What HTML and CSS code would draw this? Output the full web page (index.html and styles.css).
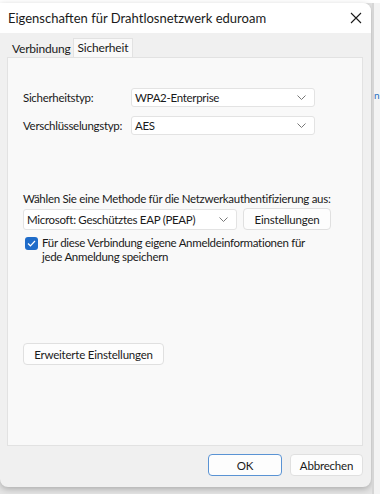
FILE: index.html
```html
<!DOCTYPE html>
<html lang="de">
<head>
  <meta charset="UTF-8" />
  <title>Eigenschaften für Drahtlosnetzwerk eduroam</title>
  <link rel="stylesheet" href="styles.css">
</head>
<body>
  <div class="screen">
    <div class="dialog">
      <div class="titlebar">
        <span class="title">Eigenschaften für Drahtlosnetzwerk eduroam</span>
        <svg class="close" width="12" height="12" viewBox="0 0 12 12">
          <path d="M1 1 L11 11 M11 1 L1 11" stroke="#1a1a1a" stroke-width="1.1" fill="none"/>
        </svg>
      </div>

      <div class="body">
        <div class="tabs">
          <div class="tab">Verbindung</div>
          <div class="tab active">Sicherheit</div>
        </div>

        <div class="panel">
          <div class="row">
            <span class="label">Sicherheitstyp:</span>
            <div class="select wide">
              <span>WPA2-Enterprise</span>
              <svg width="9" height="5" viewBox="0 0 9 5"><path d="M0.5 0.5 L4.5 4.5 L8.5 0.5" stroke="#777" fill="none"/></svg>
            </div>
          </div>
          <div class="row">
            <span class="label">Verschlüsselungstyp:</span>
            <div class="select wide">
              <span>AES</span>
              <svg width="9" height="5" viewBox="0 0 9 5"><path d="M0.5 0.5 L4.5 4.5 L8.5 0.5" stroke="#777" fill="none"/></svg>
            </div>
          </div>

          <div class="method">
            <p class="hint">Wählen Sie eine Methode für die Netzwerkauthentifizierung aus:</p>
            <div class="method-row">
              <div class="select method-select">
                <span>Microsoft: Geschütztes EAP (PEAP)</span>
                <svg width="9" height="5" viewBox="0 0 9 5"><path d="M0.5 0.5 L4.5 4.5 L8.5 0.5" stroke="#777" fill="none"/></svg>
              </div>
              <button class="btn settings">Einstellungen</button>
            </div>
            <label class="check">
              <span class="box">
                <svg width="9" height="7" viewBox="0 0 9 7"><path d="M1 3.5 L3.4 5.8 L8 1" stroke="#fff" stroke-width="1.2" fill="none"/></svg>
              </span>
              <span>Für diese Verbindung eigene Anmeldeinformationen für jede Anmeldung speichern</span>
            </label>
          </div>

          <button class="btn advanced">Erweiterte Einstellungen</button>
        </div>

        <div class="footer">
          <button class="btn ok">OK</button>
          <button class="btn">Abbrechen</button>
        </div>
      </div>
    </div>

    <div class="side">
      <span class="side-text">n</span>
    </div>
  </div>
</body>
</html>
```

FILE: styles.css
```css
body {
  margin: 0;
  background-color: #e4e4e4;
  font-family: Lato, "Noto Sans", sans-serif;
  font-size: 11.5px;
  letter-spacing: -0.3px;
  color: #1a1a1a;
}

.screen {
  display: flex;
  height: 494px;
  padding-top: 3px;
  box-sizing: border-box;
  background: linear-gradient(#ffffff 0, #ffffff 3px, #e4e4e4 3px);
}

.dialog {
  width: 371px;
  height: 484px;
  flex-shrink: 0;
  background-color: #f0f0f0;
  border-radius: 0 8px 8px 8px;
  box-shadow: 0 2px 6px rgba(0, 0, 0, 0.25);
  overflow: hidden;
  display: flex;
  flex-direction: column;
}

.titlebar {
  height: 30px;
  background-color: #fff;
  display: flex;
  align-items: center;
  justify-content: space-between;
  padding: 0 9px 0 8px;
}

.title {
  font-size: 13px;
  letter-spacing: 0;
}

.body {
  flex: 1;
  display: flex;
  flex-direction: column;
  padding: 6px 8px 0 7px;
}

.tabs {
  display: flex;
  height: 18px;
  align-items: flex-end;
  padding-left: 2px;
}

.tab {
  height: 16px;
  line-height: 16px;
  padding: 0 2px 0 3px;
  font-size: 12px;
  letter-spacing: -0.2px;
}

.tab.active {
  height: 19px;
  line-height: 18px;
  padding: 0 4px;
  background-color: #f9f9f9;
  border: 1px solid #e2e2e2;
  border-bottom: none;
  margin-bottom: -1px;
}

.panel {
  height: 389px;
  background-color: #f9f9f9;
  border: 1px solid #e2e2e2;
  padding: 30px 0 0 15px;
  box-sizing: border-box;
}

.row {
  display: flex;
  align-items: center;
  margin-bottom: 9px;
}

.label {
  width: 108px;
  white-space: nowrap;
}

.select {
  height: 19px;
  box-sizing: border-box;
  background-color: #fff;
  border: 1px solid #e3e3e3;
  border-radius: 3px;
  display: flex;
  align-items: center;
  justify-content: space-between;
  padding: 0 8px 0 3px;
  white-space: nowrap;
}

.select.wide {
  width: 184px;
}

.method {
  margin-top: 57px;
}

.hint {
  margin: 0 0 3px;
  white-space: nowrap;
}

.method-row {
  display: flex;
  gap: 6px;
  align-items: center;
}

.method-select {
  width: 214px;
  height: 21px;
}

.btn {
  font-family: inherit;
  font-size: 11.5px;
  letter-spacing: -0.2px;
  color: #1a1a1a;
  background-color: #fdfdfd;
  border: 1px solid #e0e0e0;
  border-radius: 4px;
  height: 22px;
  padding: 0;
}

.settings {
  width: 88px;
}

.check {
  display: flex;
  gap: 4px;
  margin-top: 6px;
  padding-left: 2px;
  line-height: 14px;
  width: 292px;
}

.box {
  width: 13px;
  height: 13px;
  flex-shrink: 0;
  margin-top: 1px;
  background-color: #1f6cc9;
  border-radius: 3px;
  display: flex;
  align-items: center;
  justify-content: center;
}

.advanced {
  width: 141px;
  margin-top: 79px;
}

.footer {
  display: flex;
  justify-content: flex-end;
  gap: 8px;
  padding: 8px 0 0;
}

.footer .btn {
  width: 73px;
}

.btn.ok {
  width: 74px;
  border-color: #5a93d4;
}

.side {
  flex: 1;
  position: relative;
  border-left: 2px solid #d6d6d6;
  margin-left: 1px;
  background-color: #f3f3f3;
}

.side-text {
  position: absolute;
  left: 0;
  top: 86px;
  color: #2a6fc0;
  font-size: 10px;
  white-space: nowrap;
}
```
